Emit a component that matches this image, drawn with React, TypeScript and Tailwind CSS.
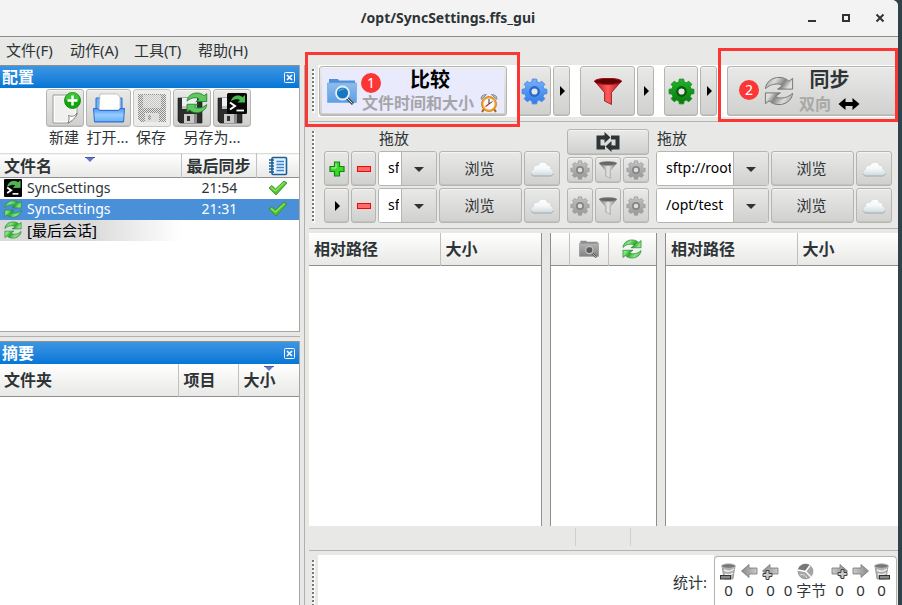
import React, { useId } from "react";
import { clsx } from "clsx";

type IconProps = { className?: string };

const BTN =
  "flex items-center justify-center rounded-[3px] border border-[#b4b4b1] bg-linear-to-b from-[#e9e9e8] to-[#d0d0ce] text-[#2e3436] shadow-[inset_0_1px_0_#f4f4f3,inset_0_-1px_0_#c2c2bf]";
const HEAD = "bg-linear-to-b from-white to-[#e8e8e6] text-left text-[16px] leading-5 font-bold";

function gearPath(cx: number, cy: number, outer: number, inner: number, teeth: number) {
  const points: string[] = [];
  const step = (Math.PI * 2) / teeth;
  for (let i = 0; i < teeth; i++) {
    const a = i * step - Math.PI / 2;
    const corners: [number, number][] = [
      [-0.34, inner],
      [-0.22, outer],
      [0.22, outer],
      [0.34, inner],
    ];
    for (const [offset, r] of corners) {
      const angle = a + offset * step;
      points.push(`${(cx + r * Math.cos(angle)).toFixed(2)} ${(cy + r * Math.sin(angle)).toFixed(2)}`);
    }
  }
  return `M${points.join("L")}Z`;
}

function Gear({ className, from, to, edge, ring, hole }: IconProps & { from: string; to: string; edge: string; ring: string; hole: string }) {
  const id = useId();
  return (
    <svg viewBox="0 0 28 28" className={className} aria-hidden="true">
      <defs>
        <linearGradient id={id} x1="0" y1="0" x2="0" y2="1">
          <stop offset="0" stopColor={from} />
          <stop offset="1" stopColor={to} />
        </linearGradient>
      </defs>
      <path d={gearPath(14, 14, 13, 10.2, 8)} fill={`url(#${id})`} stroke={edge} strokeWidth="1" strokeLinejoin="round" />
      <circle cx="14" cy="14" r="5.6" fill={ring} />
      <circle cx="14" cy="14" r="3.2" fill={hole} />
    </svg>
  );
}

const GreyGear = () => <Gear className="size-5" from="#c2c2c2" to="#989898" edge="#999" ring="#858585" hole="#dededd" />;

const ARROW = "M1.5 13.500C2 6.500 8.500 1.500 16 1.500C20.500 1.500 24 3 26.500 5.500L30.500 2.500V14H14.500L19.500 10.500C18 9 16 8.500 13.500 8.500C8.500 8.500 5 10.500 1.500 13.500Z";

function SyncArrows({ className, light, dark, edge }: IconProps & { light: string; dark: string; edge: string }) {
  const id = useId();
  return (
    <svg viewBox="0 0 32 32" className={className} aria-hidden="true">
      <defs>
        <linearGradient id={id} x1="0" y1="0" x2="1" y2="0.300">
          <stop offset="0" stopColor={dark} />
          <stop offset="0.4" stopColor={light} />
          <stop offset="0.75" stopColor={dark} />
          <stop offset="1" stopColor={light} />
        </linearGradient>
      </defs>
      <g fill={`url(#${id})`} stroke={edge} strokeWidth="1" strokeLinejoin="round">
        <path d={ARROW} />
        <path d={ARROW} transform="rotate(180 16 16)" />
      </g>
    </svg>
  );
}

const GreenSync = ({ className }: IconProps) => <SyncArrows className={className} light="#8be384" dark="#2aab30" edge="#15801c" />;

const Terminal = ({ className }: IconProps) => (
  <svg viewBox="0 0 20 20" className={className} aria-hidden="true">
    <rect width="20" height="20" rx="1" fill="#050505" />
    <path d="M4 8C5 4 8 2.500 11 2.500C13 2.500 14.500 3 15.500 4.200L18 2V9.500H10.500L13 7C11 5.500 7.500 6 4 8Z" fill="#48b94b" stroke="#8fdd8c" strokeWidth="0.500" />
    <path d="M3.500 9.500L8 12.500L3.500 15.500" fill="none" stroke="#fff" strokeWidth="2" />
    <path d="M9.500 16.500H16" stroke="#fff" strokeWidth="1.800" />
  </svg>
);

const FileNew = () => (
  <svg viewBox="0 0 32 32" className="size-8" aria-hidden="true">
    <path d="M4 3H28V23L20 31H4Z" fill="#fbfbfa" stroke="#9b9b99" strokeWidth="1" />
    <path d="M6 5H26V21L18 29H6Z" fill="#f0f0ee" />
    <path d="M19 31C20 28 20.500 26 19.500 23.500C23 25 25.500 24.500 28 21C27 26 23 29 19 31Z" fill="#fff" stroke="#666" strokeWidth="0.800" />
    <circle cx="23.500" cy="8.500" r="8" fill="#12a60d" stroke="#0b7d08" strokeWidth="0.800" />
    <path d="M16.500 7.500A7 7 0 0 1 30.500 7.500Q23.500 10 16.500 7.500Z" fill="#4fd045" opacity="0.7" />
    <path d="M23.500 3.500V13.500M18.500 8.500H28.500" stroke="#fff" strokeWidth="2.400" />
  </svg>
);

const FileOpen = () => (
  <svg viewBox="0 0 34 32" className="h-8 w-[34px]" aria-hidden="true">
    <defs>
      <linearGradient id="tray" x1="0" y1="0" x2="0" y2="1">
        <stop offset="0" stopColor="#4b95f0" />
        <stop offset="0.500" stopColor="#9fd0ff" />
        <stop offset="1" stopColor="#3c89e8" />
      </linearGradient>
    </defs>
    <path d="M4 6H30V18H4Z" fill="#6eb0f8" stroke="#2b6fd0" />
    <path d="M8 2H25L28 5V18H7Z" fill="#fff" stroke="#b8b8b8" strokeWidth="0.800" />
    <path d="M1.500 16.500H6L7.500 18.500H26.500L28 16.500H32.500L31.500 30H2.500Z" fill="url(#tray)" stroke="#2b72d4" />
    <path d="M3 24Q17 20 31 24V29H3Z" fill="#8cc6ff" opacity="0.6" />
  </svg>
);

const Floppy = ({ x = 0 }: { x?: number }) => (
  <g transform={`translate(${x} 0)`}>
    <path d="M1 6H20L25 10V31H3L1 29Z" fill="#2d2d2d" stroke="#151515" strokeWidth="0.600" />
    <path d="M5 6H20V17H5Z" fill="#eef1f4" />
    <path d="M5 14H20V17H5Z" fill="#c2c2c2" />
    <path d="M7 22H20V31H7Z" fill="#c8c8c8" />
    <path d="M10 24H13V29H10Z" fill="#333" />
    <path d="M17 22H20V31H17Z" fill="#8d8d8d" />
  </g>
);

const SaveDisabled = () => (
  <svg viewBox="0 0 32 32" className="size-8" aria-hidden="true">
    <defs>
      <pattern id="stipple" width="2" height="2" patternUnits="userSpaceOnUse">
        <rect width="1" height="1" fill="#8d8d8b" />
        <rect x="1" y="1" width="1" height="1" fill="#8d8d8b" />
      </pattern>
    </defs>
    <path d="M2 2H30V30H5L2 27Z" fill="#e6e6e4" />
    <path d="M2 2H30V30H5L2 27ZM7 3V16H25V3ZM9 21V30H23V21Z" fillRule="evenodd" fill="url(#stipple)" />
    <path d="M7 3H25V16H7Z" fill="#ebebea" />
    <path d="M7 3H25V16H7Z" fill="url(#stipple)" opacity="0.4" />
    <path d="M9 21H23V30H9Z" fill="#dededc" />
    <path d="M12 23H15V28H12Z" fill="url(#stipple)" />
  </svg>
);

const SaveSync = () => (
  <svg viewBox="0 0 32 32" className="size-8" aria-hidden="true">
    <Floppy x={1} />
    <g transform="translate(10 0) scale(0.68)" fill="#62c763" stroke="#15801c" strokeWidth="1.200">
      <path d={ARROW} />
      <path d={ARROW} transform="rotate(180 16 16)" />
    </g>
  </svg>
);

const SaveBatch = () => (
  <svg viewBox="0 0 32 32" className="size-8" aria-hidden="true">
    <Floppy x={1} />
    <rect x="11" y="1" width="20" height="21" rx="1.500" fill="#080808" />
    <path d="M15 9C16 5 19 3.500 22 3.500C24 3.500 25.500 4 26.500 5.200L29 3V10.500H21.500L24 8C22 6.500 18.500 7 15 9Z" fill="#48b94b" />
    <path d="M14 10.500L19 14L14 17.500" fill="none" stroke="#fff" strokeWidth="2" />
    <path d="M20.500 18.500H28" stroke="#fff" strokeWidth="1.800" />
  </svg>
);

const CompareFolder = ({ className, grey = false }: IconProps & { grey?: boolean }) => {
  const id = useId();
  return (
    <svg viewBox="0 0 30 27" className={className} aria-hidden="true">
      <defs>
        <linearGradient id={id} x1="0" y1="0" x2="0" y2="1">
          <stop offset="0" stopColor={grey ? "#b4b4b4" : "#8fbdec"} />
          <stop offset="1" stopColor={grey ? "#828282" : "#5c9fe4"} />
        </linearGradient>
      </defs>
      <path d="M2 4V1H11L12 2.500H28V6H2Z" fill={grey ? "#8f8f8f" : "#4f8fd8"} />
      <path d="M0.500 5H29.500V24.500H0.500Z" fill={`url(#${id})`} stroke={grey ? "#8c8c8c" : "#78ace2"} strokeWidth="0.800" />
      <path d="M20 20L26 26" stroke={grey ? "#555" : "#3b4754"} strokeWidth="3" />
      <path d="M20 20L25.500 25.500" stroke="#ddd" strokeWidth="1" />
      <circle cx="15.500" cy="15" r={grey ? 5.5 : 6.5} fill={grey ? "#5a5a5a" : "#1679c0"} stroke={grey ? "#c4c4c4" : "#e8eef4"} strokeWidth="1.800" />
      <path d="M11 14A5 5 0 0 1 18 11Q13 12 11 14Z" fill={grey ? "#888" : "#59b3e8"} />
    </svg>
  );
};

const Clock = () => (
  <svg viewBox="0 0 18 20" className="h-5 w-[18px]" aria-hidden="true">
    <path d="M1 6Q1 1.500 6.500 1.500L1.500 6.500ZM17 6Q17 1.500 11.500 1.500L16.500 6.500Z" fill="#b6bdc2" stroke="#68727a" strokeWidth="0.700" />
    <path d="M4 16L2 19M14 16L16 19" stroke="#a46512" strokeWidth="2" />
    <circle cx="9" cy="11" r="7.500" fill="#f2a72b" stroke="#c67911" strokeWidth="0.800" />
    <circle cx="9" cy="11" r="5.500" fill="#f8faff" />
    <path d="M9 6V11L12.500 8.500" fill="none" stroke="#333" strokeWidth="1" />
    <path d="M9 11L5.500 13.500" stroke="#d22" strokeWidth="1.200" />
  </svg>
);

const Funnel = ({ className, grey = false }: IconProps & { grey?: boolean }) => {
  const id = useId();
  return (
    <svg viewBox="0 0 28 27" className={className} aria-hidden="true">
      <defs>
        <linearGradient id={id} x1="0" y1="0" x2="1" y2="0">
          <stop offset="0" stopColor={grey ? "#666" : "#c00d14"} />
          <stop offset="0.500" stopColor={grey ? "#e8e8e8" : "#ff5a5e"} />
          <stop offset="1" stopColor={grey ? "#777" : "#b20a10"} />
        </linearGradient>
      </defs>
      <path d="M0.500 3L10.500 14.500V23L17.500 26.500V14.500L27.500 3Z" fill={`url(#${id})`} stroke={grey ? "#888" : "#8a0508"} strokeWidth="0.700" />
      <ellipse cx="14" cy="3.300" rx="13.500" ry="3" fill={grey ? "#666" : "#5b0507"} stroke={grey ? "#8a8a8a" : "#a50a10"} strokeWidth="1" />
    </svg>
  );
};

const Cloud = () => (
  <svg viewBox="0 0 24 16" className="h-4 w-6" aria-hidden="true">
    <defs>
      <linearGradient id="cloud" x1="0" y1="0" x2="0" y2="1">
        <stop offset="0" stopColor="#ffffff" />
        <stop offset="0.500" stopColor="#f4f7f8" />
        <stop offset="1" stopColor="#cdd8dd" />
      </linearGradient>
    </defs>
    <path d="M4 15C0 15 0 9 3.500 8.500C3.500 5 6 3.500 8 4.500C9.500 0 16.500 0 17.500 4.500C20 4 21.500 6 20.500 8C24.500 9 24 15 20 15Z" fill="url(#cloud)" stroke="#c6cbcd" strokeWidth="0.500" />
    <path d="M1.500 13C2 14.500 3 15 4 15H20C21.500 15 22.500 14.500 23 13" fill="none" stroke="#a5acaf" strokeWidth="1" />
  </svg>
);

const Check = () => (
  <svg viewBox="0 0 20 16" className="mx-auto h-4 w-5" aria-hidden="true">
    <path d="M1 8L4 5.500L7.500 9L16 1L19 3L8 15Z" fill="#4cc22c" stroke="#3a8a25" strokeWidth="0.800" strokeLinejoin="round" />
    <path d="M3 7.500L7.500 11L16.500 2.500" fill="none" stroke="#93e373" strokeWidth="1.200" />
  </svg>
);

const LogBook = () => (
  <svg viewBox="0 0 20 20" className="mx-auto size-5" aria-hidden="true">
    <rect x="4" y="1.500" width="14.500" height="17" rx="1" fill="#e4f1ff" stroke="#1e5f96" strokeWidth="1.600" />
    <path d="M8.500 5.500H16M8.500 8.500H16M8.500 11.500H16M8.500 14.500H16" stroke="#3d87c5" strokeWidth="1.300" />
    <path d="M1 4H6M1 7H6M1 10H6M1 13H6M1 16H6" stroke="#1e5f96" strokeWidth="1.300" />
  </svg>
);

const Triangle = ({ dir }: { dir: "right" | "down" }) => (
  <svg viewBox="0 0 10 10" className="size-[10px]" aria-hidden="true">
    {dir === "right" ? <path d="M3 0L8 5L3 10Z" fill="#000" /> : <path d="M0 3H10L5 8Z" fill="#2e3436" />}
  </svg>
);

const SortMark = () => (
  <svg viewBox="0 0 10 5" className="h-[5px] w-[10px]" aria-hidden="true">
    <path d="M0 0H10L5 5Z" fill="#6577d2" />
    <path d="M0 0.500H10" stroke="#4656a8" />
  </svg>
);

const Plus = () => (
  <svg viewBox="0 0 16 16" className="size-4" aria-hidden="true">
    <path d="M5.500 1H10.500V5.500H15V10.500H10.500V15H5.500V10.500H1V5.500H5.500Z" fill="#3fd62c" stroke="#118a0e" strokeWidth="1.200" />
    <path d="M7 2.500V7H2.500" stroke="#b5f5a5" fill="none" />
  </svg>
);

const Minus = () => (
  <svg viewBox="0 0 14 6" className="h-[6px] w-[14px]" aria-hidden="true">
    <rect x="0.500" y="0.500" width="13" height="5" fill="#ff6a6a" stroke="#e80a0a" />
  </svg>
);

const Swap = () => (
  <svg viewBox="0 0 24 20" className="h-5 w-6" aria-hidden="true">
    <path d="M9 15.500H2.500V5.500H8" fill="none" stroke="#2e3436" strokeWidth="4" />
    <path d="M15 5.500H21.500V15.500H16" fill="none" stroke="#2e3436" strokeWidth="4" />
    <path d="M7 3.500H8.500V0L14.500 5.500L8.500 11V7.500H7Z" fill="#2e3436" />
    <path d="M17 17.500H15.500V20L9.500 14.500L15.500 9V13.500H17Z" fill="#2e3436" />
  </svg>
);

const TwoWay = () => (
  <svg viewBox="0 0 22 12" className="h-3 w-[22px]" aria-hidden="true">
    <path d="M0.500 6L7.500 0V4H14.500V0L21.500 6L14.500 12V8H7.500V12Z" fill="#000" />
  </svg>
);

function StatArrow({ flip = false, plus = false }: { flip?: boolean; plus?: boolean }) {
  const id = useId();
  return (
    <svg viewBox="0 0 17 17" className="size-[17px]" aria-hidden="true">
      <defs>
        <linearGradient id={id} x1="0" y1="0" x2="1" y2="0">
          <stop offset="0" stopColor="#8a8a8a" />
          <stop offset="1" stopColor="#cacaca" />
        </linearGradient>
      </defs>
      <path d="M0.500 8L8 1.500V5H16V11H8V14.500Z" fill={`url(#${id})`} stroke="#777" strokeWidth="0.800" transform={flip ? "rotate(180 8.500 8)" : undefined} />
      {plus && (
        <path d="M4 7.500H7V10.500H10V13.500H7V16.500H4V13.500H1V10.500H4Z" fill="#ccc" stroke="#444" strokeWidth="1" transform={flip ? "translate(6 -1)" : undefined} />
      )}
    </svg>
  );
}

const StatBin = ({ right = false }: { right?: boolean }) => (
  <svg viewBox="0 0 17 17" className="size-[17px]" aria-hidden="true">
    <path d="M2 3H15L13 16H4Z" fill="#b0b0b0" stroke="#888" strokeWidth="0.700" />
    <path d="M4 7Q9 10 14 6M5 11Q9 13 13 10" stroke="#eee" strokeWidth="1.500" fill="none" />
    <ellipse cx="8.500" cy="3" rx="7" ry="2.200" fill="#777" stroke="#bbb" strokeWidth="0.800" />
    <rect x={right ? 6.5 : 0.5} y="12.500" width="10" height="3.500" fill="#888" stroke="#333" />
  </svg>
);

const StatPie = () => (
  <svg viewBox="0 0 17 17" className="size-[17px]" aria-hidden="true">
    <circle cx="8.500" cy="8.500" r="7.500" fill="#a5a5a5" stroke="#888" strokeWidth="0.600" />
    <path d="M8.500 8.500L1 7A7.500 7.500 0 0 1 13 2.500Z" fill="#777" />
    <path d="M1 7L8.500 8.500L14 14M8.500 8.500L13 2.500" stroke="#fff" strokeWidth="1.400" fill="none" />
    <path d="M3 12Q7 10 10 15" fill="none" stroke="#ddd" />
  </svg>
);

const Grip = () => (
  <div className="ml-[3px] w-[3px] shrink-0 self-stretch border-r border-white bg-[repeating-linear-gradient(to_bottom,#777_0_2px,#f4f4f4_2px_4px)]" />
);

function PanelTitle({ children }: { children: React.ReactNode }) {
  return (
    <div className="flex h-[23px] shrink-0 items-center justify-between border-t border-[#8f8f8c] bg-linear-to-b from-[#3b96e2] to-[#0076d7] pr-[4px] pl-[2px] text-[16px] leading-5 font-bold text-white">
      <h2>{children}</h2>
      <button type="button" aria-label="关闭面板" className="size-[11px]">
        <svg viewBox="0 0 11 11" className="size-[11px]" aria-hidden="true">
          <rect x="0.500" y="0.500" width="10" height="10" rx="1" fill="none" stroke="#fff" />
          <path d="M3 3L8 8M8 3L3 8" stroke="#fff" strokeWidth="1.700" />
        </svg>
      </button>
    </div>
  );
}

function PathBox({ label, value }: { label: string; value: string }) {
  return (
    <div className="flex h-[35px] min-w-0 flex-1 overflow-hidden rounded-[3px] border border-[#b4b4b1] bg-white">
      <input aria-label={label} defaultValue={value} className="w-0 min-w-0 flex-1 bg-white pr-[2px] pb-[2px] pl-[9px] text-[14px] text-black outline-none" />
      <button type="button" aria-label="历史记录" className="flex w-[35px] shrink-0 items-center justify-center border-l border-[#b4b4b1] bg-linear-to-b from-[#e9e9e8] to-[#d0d0ce]">
        <Triangle dir="down" />
      </button>
    </div>
  );
}

function BrowseButtons() {
  return (
    <>
      <button type="button" className={clsx(BTN, "h-[35px] w-[83px] shrink-0 pr-[2px] pb-[2px]")}>浏览</button>
      <button type="button" aria-label="云存储" className={clsx(BTN, "h-[35px] w-[36px] shrink-0")}>
        <Cloud />
      </button>
    </>
  );
}

function Badge({ n, className }: { n: number; className: string }) {
  return (
    <span className={clsx("absolute z-20 flex size-5 items-center justify-center rounded-full bg-[#fc3635] text-[14px] leading-none font-normal text-white", className)}>{n}</span>
  );
}

const MENUS = ["文件(F)", "动作(A)", "工具(T)", "帮助(H)"];

function PathHeader() {
  return (
    <table className="w-full table-fixed">
      <thead>
        <tr className="h-[32px] border-b border-[#8f8f8c]">
          <th className={clsx(HEAD, "border-r border-[#c0c0be] pl-[5px]")}>相对路径</th>
          <th className={clsx(HEAD, "w-[101px] pl-[5px]")}>大小</th>
        </tr>
      </thead>
    </table>
  );
}

const FILES = [
  { name: "SyncSettings", time: "21:54", batch: true, selected: false },
  { name: "SyncSettings", time: "21:31", batch: false, selected: true },
];

const STATS = [
  { icon: <StatBin />, text: "0" },
  { icon: <StatArrow />, text: "0" },
  { icon: <StatArrow plus />, text: "0" },
  { icon: <StatPie />, text: "0 字节", wide: true },
  { icon: <StatArrow flip plus />, text: "0" },
  { icon: <StatArrow flip />, text: "0" },
  { icon: <StatBin right />, text: "0" },
];

export default function App() {
  return (
    <div className="h-screen overflow-hidden bg-[#30434a] pr-1 font-['Noto_Sans','Noto_Sans_CJK_SC',sans-serif] text-[15px] leading-5 text-[#2e3436]">
      <div className="flex h-full flex-col overflow-hidden rounded-tr-md bg-[#e8e8e6]">
        <header className="flex h-[37px] shrink-0 items-center border-b border-[#8b8e88] bg-[#f3f3f3] pr-[10px]">
          <div className="w-[92px]" />
          <h1 className="flex-1 text-center text-[14px] font-bold">/opt/SyncSettings.ffs_gui</h1>
          <div className="flex gap-[18px]">
            {["最小化", "最大化", "关闭"].map((name, i) => (
              <button key={name} type="button" aria-label={name} className="size-4">
                <svg viewBox="0 0 16 16" className="size-4" aria-hidden="true">
                  {i === 0 && <path d="M4 11H12" stroke="#2e3436" strokeWidth="2" />}
                  {i === 1 && <rect x="5" y="5" width="6" height="6" fill="none" stroke="#2e3436" strokeWidth="2" />}
                  {i === 2 && <path d="M4.500 4.500L11.500 11.500M11.500 4.500L4.500 11.500" stroke="#2e3436" strokeWidth="2" />}
                </svg>
              </button>
            ))}
          </div>
        </header>

        <nav className="flex h-[28px] shrink-0 items-center gap-4 px-[6px] pb-[2px]">
          {MENUS.map((m) => (
            <button key={m} type="button" className="w-[48px] text-left whitespace-nowrap">{m}</button>
          ))}
        </nav>

        <div className="flex min-h-0 flex-1">
          <aside className="flex w-[300px] shrink-0 flex-col">
            <section className="flex h-[267px] shrink-0 flex-col border-r border-b border-[#a6a6a3] bg-white">
              <PanelTitle>配置</PanelTitle>
              <div className="flex h-[65px] shrink-0 justify-center gap-[2px] pt-[1px] pr-[2px]">
                <div className="flex w-[38px] flex-col items-center">
                  <button type="button" aria-labelledby="new-label" className={clsx(BTN, "h-[38px] w-full")}><FileNew /></button>
                  <span id="new-label" className="pr-[2px] whitespace-nowrap">新建</span>
                </div>
                <div className="flex w-[45px] flex-col items-center">
                  <button type="button" aria-labelledby="open-label" className={clsx(BTN, "h-[38px] w-full")}><FileOpen /></button>
                  <span id="open-label" className="pr-[2px] whitespace-nowrap">打开...</span>
                </div>
                <div className="flex w-[38px] flex-col items-center">
                  <button type="button" disabled aria-labelledby="save-label" className="flex h-[38px] w-full items-center justify-center rounded-[3px] border border-[#c4c4c1] bg-[#ececeb]"><SaveDisabled /></button>
                  <span id="save-label" className="pr-[2px] whitespace-nowrap">保存</span>
                </div>
                <div className="flex w-[78px] flex-col items-center">
                  <div className="flex w-full gap-[2px]">
                    <button type="button" aria-label="另存为同步配置" className={clsx(BTN, "h-[38px] flex-1")}><SaveSync /></button>
                    <button type="button" aria-label="另存为批处理" className={clsx(BTN, "h-[38px] flex-1")}><SaveBatch /></button>
                  </div>
                  <span className="whitespace-nowrap">另存为...</span>
                </div>
              </div>
              <table className="w-full table-fixed">
                <thead>
                  <tr className="h-[24px] border-t border-b border-t-[#dcdcda] border-b-[#8f8f8c]">
                    <th className={clsx(HEAD, "relative border-r border-[#c0c0be] pl-[4px]")}>
                      文件名
                      <span className="absolute top-[3px] left-1/2 -translate-x-1/2"><SortMark /></span>
                    </th>
                    <th className={clsx(HEAD, "w-[75px] border-r border-[#c0c0be] pl-[5px]")}>最后同步</th>
                    <th aria-label="日志" className={clsx(HEAD, "w-[43px]")}><LogBook /></th>
                  </tr>
                </thead>
                <tbody>
                  {FILES.map((f) => (
                    <tr key={f.time} className={clsx("h-[21px] text-[14px]", f.selected && "bg-[#4a90d9] text-white")}>
                      <td className="pl-[4px]">
                        <span className="flex items-center gap-[5px]">
                          {f.batch ? <Terminal className="size-[18px]" /> : <GreenSync className="size-[18px]" />}
                          {f.name}
                        </span>
                      </td>
                      <td className="pl-[2px] text-center">{f.time}</td>
                      <td><Check /></td>
                    </tr>
                  ))}
                  <tr className="h-[21px]">
                    <td className="bg-linear-to-r from-[#dadada] from-50% to-white pl-[4px] text-black">
                      <span className="flex items-center gap-[5px]">
                        <GreenSync className="size-[18px]" />
                        [最后会话]
                      </span>
                    </td>
                    <td />
                    <td />
                  </tr>
                </tbody>
              </table>
            </section>
            <div className="h-[9px] shrink-0 py-[4px]"><div className="h-px bg-[#b0b0ad]" /></div>
            <section className="min-h-0 flex-1 border-r border-[#a6a6a3] bg-white">
              <PanelTitle>摘要</PanelTitle>
              <table className="w-full table-fixed">
                <thead>
                  <tr className="h-[32px] border-b border-[#8f8f8c]">
                    <th className={clsx(HEAD, "border-r border-[#c0c0be] pl-[4px]")}>文件夹</th>
                    <th className={clsx(HEAD, "w-[60px] border-r border-[#c0c0be] pl-[5px]")}>项目</th>
                    <th className={clsx(HEAD, "relative w-[61px] pl-[5px]")}>
                      大小
                      <span className="absolute top-[2px] left-1/2 -translate-x-1/2"><SortMark /></span>
                    </th>
                  </tr>
                </thead>
              </table>
            </section>
          </aside>

          <div className="ml-[4px] w-[5px] shrink-0 border-l border-[#b0b0ad]" />

          <main className="flex min-w-0 flex-1 flex-col">
            <section className="flex h-[57px] shrink-0 border-b border-[#b4b4b1] pb-[4px]">
              <div className="flex w-[9px] shrink-0 py-[4px]"><Grip /></div>
              <div className="flex h-[52px] min-w-0 flex-1 bg-white py-[1px] pl-[1px]">
                <div className="relative w-[188px] shrink-0">
                  <button type="button" className={clsx(BTN, "h-[50px] w-full p-[2px]")}>
                    <span className="flex h-full w-full items-center gap-[5px] bg-[#eaeafd] pl-[5px]">
                      <CompareFolder className="h-[27px] w-[30px] shrink-0" />
                      <span className="flex flex-col items-center">
                        <span className="h-[24px] text-[20px] leading-[22px] font-bold text-black">比较</span>
                        <span className="flex h-[20px] items-center gap-[6px] text-[16px] font-bold whitespace-nowrap text-[#a5a5a9]">
                          文件时间和大小
                          <Clock />
                        </span>
                      </span>
                    </span>
                  </button>
                  <Badge n={1} className="top-[7px] left-[42px]" />
                  <div className="pointer-events-none absolute -top-[14px] -right-[13px] -left-[14px] z-10 h-[75px] border-3 border-[#fc3635]" />
                </div>
                <button type="button" aria-label="比较设置" className={clsx(BTN, "ml-[10px] w-[34px] shrink-0")}>
                  <Gear className="size-[27px]" from="#79b0f8" to="#2f7ce8" edge="#4287e4" ring="#2469cf" hole="#e6e6e5" />
                </button>
                <button type="button" aria-label="比较方式" className={clsx(BTN, "ml-[2px] w-[17px] shrink-0")}><Triangle dir="right" /></button>
                <button type="button" aria-label="过滤器" className={clsx(BTN, "ml-[10px] w-[55px] shrink-0")}><Funnel className="h-[27px] w-[28px]" /></button>
                <button type="button" aria-label="过滤器选项" className={clsx(BTN, "ml-[2px] w-[17px] shrink-0")}><Triangle dir="right" /></button>
                <button type="button" aria-label="同步设置" className={clsx(BTN, "ml-[10px] w-[34px] shrink-0")}>
                  <Gear className="size-[27px]" from="#21b32a" to="#067a0d" edge="#138a1a" ring="#075e0b" hole="#e6e6e5" />
                </button>
                <button type="button" aria-label="同步方式" className={clsx(BTN, "ml-[2px] w-[17px] shrink-0")}><Triangle dir="right" /></button>
                <div className="relative ml-[10px] min-w-0 flex-1">
                  <button type="button" className={clsx(BTN, "h-[50px] w-full gap-[5px] rounded-r-none border-r-0 pr-[2px]")}>
                    <SyncArrows className="size-[30px] shrink-0" light="#dedede" dark="#858585" edge="#747474" />
                    <span className="flex flex-col items-center">
                      <span className="h-[25px] text-[20px] leading-[22px] font-bold">同步</span>
                      <span className="flex h-[20px] items-center gap-[7px] text-[16px] font-bold text-[#a8a8a6]">双向 <TwoWay /></span>
                    </span>
                  </button>
                  <Badge n={2} className="top-[14px] left-[12px]" />
                  <div className="pointer-events-none absolute -top-[18px] right-0 -left-[9px] z-10 h-[74px] border-3 border-[#fc3635]" />
                </div>
              </div>
            </section>

            <section className="flex shrink-0 border-b border-[#b4b4b1] pt-[7px] pr-[6px] pb-[5px]">
              <div className="flex w-[15px] shrink-0 pt-[2px]"><Grip /></div>
              <div className="grid min-w-0 flex-1 grid-cols-[minmax(0,1fr)_82px_minmax(0,1fr)] gap-[7px]">
                <div>
                  <div className="h-[22px] pl-[55px] leading-[18px]">拖放</div>
                  <div className="flex flex-col gap-[2px]">
                    <div className="flex gap-[2px]">
                      <button type="button" aria-label="添加文件夹对" className={clsx(BTN, "w-[25px] shrink-0")}><Plus /></button>
                      <button type="button" aria-label="删除文件夹对 1" className={clsx(BTN, "w-[25px] shrink-0")}><Minus /></button>
                      <PathBox label="左侧文件夹 1" value="sftp://root" />
                      <BrowseButtons />
                    </div>
                    <div className="flex gap-[2px]">
                      <button type="button" aria-label="文件夹对选项" className={clsx(BTN, "w-[25px] shrink-0")}><Triangle dir="right" /></button>
                      <button type="button" aria-label="删除文件夹对 2" className={clsx(BTN, "w-[25px] shrink-0")}><Minus /></button>
                      <PathBox label="左侧文件夹 2" value="sftp://root" />
                      <BrowseButtons />
                    </div>
                  </div>
                </div>
                <div>
                  <button type="button" aria-label="交换两侧" className={clsx(BTN, "h-[26px] w-full")}><Swap /></button>
                  <div className="mt-[2px] grid h-[26px] grid-cols-3 gap-[2px]">
                    <button type="button" aria-label="本地比较设置 1" className={BTN}><GreyGear /></button>
                    <button type="button" aria-label="本地过滤器 1" className={BTN}><Funnel grey className="h-[18px] w-[18px]" /></button>
                    <button type="button" aria-label="本地同步设置 1" className={BTN}><GreyGear /></button>
                  </div>
                  <div className="mt-[5px] grid h-[35px] grid-cols-3 gap-[2px]">
                    <button type="button" aria-label="本地比较设置 2" className={BTN}><GreyGear /></button>
                    <button type="button" aria-label="本地过滤器 2" className={BTN}><Funnel grey className="h-[18px] w-[18px]" /></button>
                    <button type="button" aria-label="本地同步设置 2" className={BTN}><GreyGear /></button>
                  </div>
                </div>
                <div>
                  <div className="h-[22px] pl-[1px] leading-[18px]">拖放</div>
                  <div className="flex flex-col gap-[2px]">
                    <div className="flex gap-[2px]"><PathBox label="右侧文件夹 1" value="sftp://root" /><BrowseButtons /></div>
                    <div className="flex gap-[2px]"><PathBox label="右侧文件夹 2" value="/opt/test" /><BrowseButtons /></div>
                  </div>
                </div>
              </div>
            </section>

            <section className="mt-[4px] flex min-h-0 flex-1 gap-[8px]">
              <div className="min-w-0 flex-1 border-r border-[#8f8f8c] bg-white"><PathHeader /></div>
              <div className="w-[107px] shrink-0 border-x border-[#8f8f8c] bg-white">
                <table className="w-full table-fixed">
                  <thead>
                    <tr className="h-[32px] border-b border-[#8f8f8c]">
                      <th aria-label="选择" className={clsx(HEAD, "w-[18px] border-r border-[#c0c0be]")} />
                      <th aria-label="类别" className={clsx(HEAD, "w-[39px] border-r border-[#c0c0be]")}><CompareFolder grey className="mx-auto h-[18px] w-5" /></th>
                      <th aria-label="操作" className={HEAD}><GreenSync className="mx-auto size-5" /></th>
                    </tr>
                  </thead>
                </table>
              </div>
              <div className="min-w-0 flex-1 border-l border-[#8f8f8c] bg-white"><PathHeader /></div>
            </section>

            <div className="flex h-[25px] shrink-0 justify-center border-b border-[#b4b4b1] pt-[2px] pr-[2px] pb-[4px]">
              <div className="w-[56px] border-x border-[#cfcfcc]" />
            </div>

            <footer className="mt-[4px] flex h-[50px] shrink-0">
              <div className="flex w-[9px] shrink-0 pt-[5px]"><Grip /></div>
              <div className="flex min-w-0 flex-1 items-center justify-end bg-white pt-[3px] pr-[7px]">统计:</div>
              <div className="w-[184px] shrink-0 pt-[1px] pr-[1px]">
                <dl className="flex h-full rounded-t-[4px] border border-b-0 border-[#b4b4b1] bg-white pt-[6px] pl-[3px]">
                  {STATS.map((s, i) => (
                    <div key={i} className={clsx("flex flex-col items-center whitespace-nowrap", s.wide ? "w-[48px]" : "w-[21px]")}>
                      <dt>{s.icon}</dt>
                      <dd>{s.text}</dd>
                    </div>
                  ))}
                </dl>
              </div>
            </footer>
          </main>
        </div>
      </div>
    </div>
  );
}
